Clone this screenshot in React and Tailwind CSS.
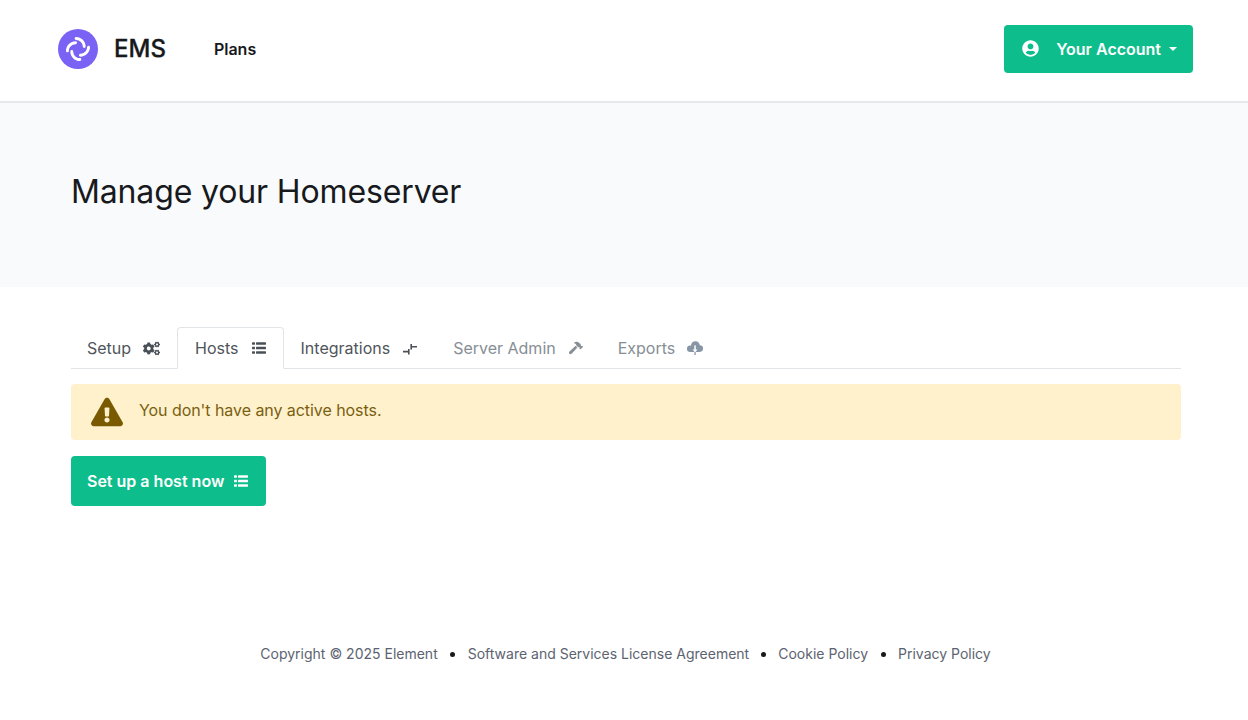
import React from "react";
import { FaCogs, FaHammer, FaUserCircle, FaExclamationTriangle } from "react-icons/fa";

function Logo() {
  return (
    <div className="flex h-10 w-10 items-center justify-center rounded-full bg-[#7a62f5]">
      <svg viewBox="0 0 54 54" className="h-6 w-6" fill="#fff">
        <path d="M19.4414 3.24C19.4414 1.4506 20.8944 0 22.6868 0C34.6062 0 44.2691 9.64262 44.2691 21.5374C44.2691 23.3268 42.8161 24.7774 41.0237 24.7774C39.2313 24.7774 37.7783 23.3268 37.7783 21.5374C37.7783 13.2215 31.0239 6.48 22.6868 6.48C20.8944 6.48 19.4414 5.02939 19.4414 3.24Z" />
        <path d="M34.5586 50.76C34.5586 52.5494 33.1056 54 31.3132 54C19.3938 54 9.73092 44.3574 9.73092 32.4626C9.73092 30.6732 11.1839 29.2226 12.9763 29.2226C14.7687 29.2226 16.2217 30.6732 16.2217 32.4626C16.2217 40.7785 22.9761 47.52 31.3132 47.52C33.1056 47.52 34.5586 48.9706 34.5586 50.76Z" />
        <path d="M3.24 34.5586C1.4506 34.5586 0 33.1056 0 31.3132C0 19.3938 9.64262 9.73094 21.5374 9.73094C23.3268 9.73094 24.7774 11.1839 24.7774 12.9763C24.7774 14.7687 23.3268 16.2217 21.5374 16.2217C13.2215 16.2217 6.48 22.9761 6.48 31.3132C6.48 33.1056 5.02939 34.5586 3.24 34.5586Z" />
        <path d="M50.76 19.4414C52.5494 19.4414 54 20.8944 54 22.6868C54 34.6062 44.3574 44.2691 32.4626 44.2691C30.6732 44.2691 29.2226 42.8161 29.2226 41.0237C29.2226 39.2313 30.6732 37.7783 32.4626 37.7783C40.7785 37.7783 47.52 31.0239 47.52 22.6868C47.52 20.8944 48.9706 19.4414 50.76 19.4414Z" />
      </svg>
    </div>
  );
}

function PlugIcon({ className }) {
  return (
    <svg viewBox="-1 0 16 16" className={className} fill="currentColor">
      <path d="M7.4 4h1.6v2h5v1.6H9v2H7.4z" />
      <path d="M5 9h1.6v5.4H5v-2H0v-1.6h5z" />
    </svg>
  );
}

function ListIcon({ className }) {
  return (
    <svg viewBox="0 0 14 12" className={className} fill="currentColor">
      <rect x="0" y="0.3" width="3" height="2.4" rx="0.4" />
      <rect x="4" y="0.3" width="10" height="2.4" rx="0.4" />
      <rect x="0" y="4.8" width="3" height="2.4" rx="0.4" />
      <rect x="4" y="4.8" width="10" height="2.4" rx="0.4" />
      <rect x="0" y="9.3" width="3" height="2.4" rx="0.4" />
      <rect x="4" y="9.3" width="10" height="2.4" rx="0.4" />
    </svg>
  );
}

function CloudIcon({ className }) {
  return (
    <svg viewBox="0 0 16 14" className={className} fill="#8796a5">
      <circle cx="8.4" cy="4.6" r="4.4" />
      <circle cx="3.2" cy="7.8" r="3.2" />
      <circle cx="12.7" cy="7.6" r="3.3" />
      <rect x="3.2" y="6" width="9.5" height="5" />
      <rect x="7.3" y="4.4" width="1.5" height="5" fill="#fff" />
      <path d="M5.6 8.6h4.9L8 11.4z" fill="#fff" />
      <rect x="7.4" y="11" width="1.3" height="3" />
    </svg>
  );
}

function Tab({ label, icon, cls }) {
  return (
    <li className={"flex h-[42px] items-center text-base leading-6 " + cls}>
      <span>{label}</span>
      <span className="ml-[11px] flex h-4 w-[18px] items-center justify-center">{icon}</span>
    </li>
  );
}

export default function App() {
  return (
    <div className="flex min-h-[720px] flex-col bg-white font-['Inter','Liberation_Sans',sans-serif] text-[#17191c]">
      <header className="flex h-[103px] items-center justify-between border-b-2 border-[#e6e8ec] pb-1 pl-[58px] pr-[55px]">
        <div className="flex items-center">
          <Logo />
          <span className="ml-4 text-2xl font-medium leading-8 [-webkit-text-stroke:0.3px_#17191c]">EMS</span>
          <a className="ml-12 text-base font-semibold leading-6">Plans</a>
        </div>
        <button className="flex h-12 items-center rounded-[4px] bg-[#0dbd8b] pl-[18px] pr-4 text-base font-semibold text-white">
          <FaUserCircle className="h-[17px] w-[17px]" />
          <span className="ml-[17px]">Your Account</span>
          <span className="ml-2 h-0 w-0 border-x-[4px] border-t-[4px] border-x-transparent border-t-white" />
        </button>
      </header>

      <section className="flex h-[184px] items-center bg-[#f9fafc] px-[71px] pb-[7px]">
        <h1 className="text-[32px] font-normal leading-10 tracking-[-0.14px] text-[#17191c]">Manage your Homeserver</h1>
      </section>

      <main className="pl-[71px] pr-[67px] pt-10">
        <ul className="flex h-[42px] border-b border-[#e2e5e8]">
          <Tab label="Setup" cls="pl-4 pr-[17px] text-[#4f555b]" icon={<FaCogs className="h-[17px] w-[17px] text-[#495057]" />} />
          <Tab
            label="Hosts"
            cls="rounded-t-[4px] border border-b-white border-[#e2e5e8] bg-white pl-[17px] pr-[15px] text-[#4f555b]"
            icon={<ListIcon className="h-3 w-3.5 text-[#495057]" />}
          />
          <Tab label="Integrations" cls="pl-[17px] pr-[17px] text-[#4f555b]" icon={<PlugIcon className="h-4 w-4 text-[#495057]" />} />
          <Tab label="Server Admin" cls="pl-[17px] pr-4 text-[#868e96]" icon={<FaHammer className="h-3.5 w-3.5 text-[#868e96]" />} />
          <Tab label="Exports" cls="px-[17px] text-[#868e96]" icon={<CloudIcon className="h-[14px] w-4" />} />
        </ul>

        <div className="mt-[15px] flex h-14 items-center rounded-[4px] bg-[#fff1cc] pl-5 text-base text-[#7a5f10]">
          <FaExclamationTriangle className="h-8 w-8 text-[#7a5a00]" />
          <span className="mb-1 ml-4 tracking-[-0.06px]">You don't have any active hosts.</span>
        </div>

        <button className="mt-4 flex h-[50px] items-center rounded-[4px] bg-[#0dbd8b] pl-4 pr-[18px] text-base font-semibold text-white">
          <span>Set up a host now</span>
          <ListIcon className="ml-[10px] h-3 w-3.5" />
        </button>
      </main>

      <footer className="mt-[138px] flex items-center justify-center pl-[3px] text-sm leading-5 text-[#5c6370]">
        <span>Copyright © 2025 Element</span>
        <span className="mx-[12.5px] h-[5px] w-[5px] rounded-full bg-[#17191c]" />
        <a>Software and Services License Agreement</a>
        <span className="mx-3 h-[5px] w-[5px] rounded-full bg-[#17191c]" />
        <a>Cookie Policy</a>
        <span className="mx-[12.5px] h-[5px] w-[5px] rounded-full bg-[#17191c]" />
        <a>Privacy Policy</a>
      </footer>
    </div>
  );
}
